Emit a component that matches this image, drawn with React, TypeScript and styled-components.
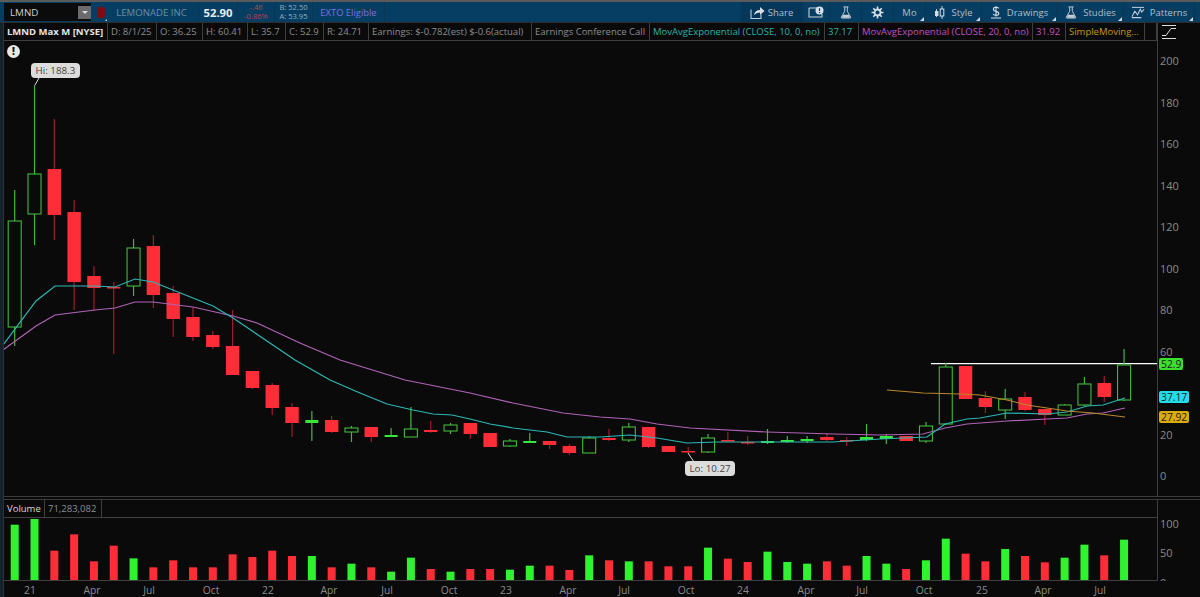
import React from "react";
import styled, { createGlobalStyle } from "styled-components";

const Global = createGlobalStyle`
  html, body { margin: 0; padding: 0; background: #0a0a0a; }
  body { font-family: "Open Sans", "Liberation Sans", sans-serif; }
`;

const Page = styled.div`
  width: 1200px; height: 597px; overflow: hidden; background: #0a0a0a;
  display: flex; flex-direction: column;
`;
const TopRule = styled.div`height: 2px; background: #5b5b5b; flex: none;`;
const Toolbar = styled.div`
  height: 20px; flex: none; display: flex; align-items: stretch; background: #063e63;
  border-bottom: 1px solid #2d2d2d; padding: 0 5px 0 4px; color: #c9d6df; font-size: 11px;
`;
const SymbolBox = styled.div`
  width: 87px; margin: 1px 0; background: #0b0b0b; display: flex; align-items: center; justify-content: space-between;
  padding-left: 6px; color: #d0d0d0; font-size: 9.8px; box-sizing: border-box;
`;
const Drop = styled.div`
  width: 13px; height: 13px; background: #6b6b6b; display: flex; align-items: center; justify-content: center;
  &::after { content: ""; border: 3px solid transparent; border-top: 3px solid #ddd; margin-top: 3px; }
`;
const RedFlag = styled.div`
  width: 8px; height: 11px; margin: 5px 0 0 6px; background: #7d0d14; border-radius: 2px; flex: none; position: relative;
  &::after { content: ""; position: absolute; right: -2px; bottom: -3px; border: 1.5px solid transparent; border-right-color: #cfd8de; border-bottom-color: #cfd8de; }
`;
const Cell = styled.div<{ $w: number; $line?: boolean }>`
  width: ${p => p.$w}px; flex: none; box-sizing: border-box; display: flex; flex-direction: column;
  align-items: center; justify-content: center;
  ${p => p.$line ? "border-right: 1px solid #0d3450;" : ""}
`;
const Company = styled.span`color: #6a8ea6; font-size: 9.6px; white-space: nowrap;`;
const Last = styled.span`color: #e6edf2; font-size: 11.3px; font-weight: 700;`;
const Tiny = styled.span<{ $red?: boolean }>`
  color: ${p => p.$red ? "#b8434f" : "#93acbd"}; font-size: 7.6px; line-height: 9px; white-space: nowrap;
`;
const Exto = styled.span`color: #7f6ee0; font-size: 9.4px; white-space: nowrap;`;
const Spacer = styled.div`flex: 1;`;
const ToolButton = styled.div<{ $w: number; $corner?: boolean; $tint?: boolean }>`
  width: ${p => p.$w}px; flex: none; position: relative; display: flex; align-items: center; justify-content: center;
  gap: 3px; color: #aebfcb; font-size: 9.5px; box-sizing: border-box;
  background: ${p => p.$tint ? "#05375a" : "transparent"};
  border-right: 1px solid #0b3550;
  ${p => p.$corner ? `&::after { content: ""; position: absolute; right: 1px; bottom: 1px; border: 2px solid transparent; border-right-color: #cfd8de; border-bottom-color: #cfd8de; }` : ""}
  svg { flex: none; }
`;
const Label = styled.span<{ $gap?: number }>`
  margin-left: ${p => p.$gap || 0}px; white-space: nowrap;
`;

const Body = styled.div`flex: 1; display: flex; min-height: 0;`;
const LeftEdge = styled.div`width: 3px; flex: none; background: #14222c; border-right: 1px solid #2d3338;`;
const Column = styled.div`flex: 1; display: flex; flex-direction: column; min-width: 0;`;

const PricePane = styled.div`
  height: 474px; flex: none; position: relative; border-bottom: 1px solid #3c3c3c; box-sizing: border-box;
`;
const Legend = styled.div`
  height: 18px; width: 1153px; display: flex; border-bottom: 1px solid #3f3f3f; box-sizing: border-box; position: relative; z-index: 1;
`;
const LegendCell = styled.div<{ $w: number; $c?: string; $bold?: boolean }>`
  width: ${p => p.$w}px; flex: none; box-sizing: border-box; border-right: 1px solid #3f3f3f;
  color: ${p => p.$c || "#8d8d8d"}; font-size: 9.5px; font-weight: ${p => p.$bold ? 700 : 400};
  line-height: 17px; padding-left: 3px; white-space: nowrap; overflow: hidden;
`;
const ChartSvg = styled.svg`position: absolute; left: 0; top: 0; display: block;`;
const Callout = styled.div<{ $x: number; $y: number }>`
  position: absolute; left: ${p => p.$x}px; top: ${p => p.$y}px; padding: 0 4.5px; height: 15px; line-height: 15px;
  background: #dcdcdc; color: #444; font-size: 9.8px; border-radius: 4px; white-space: nowrap;
`;
const Alert = styled.div`
  position: absolute; left: 3px; top: 22px; width: 13px; height: 13px; border-radius: 50%; background: #e8e8e8;
  color: #111; font-size: 10px; font-weight: 800; line-height: 13px; text-align: center;
`;
const PriceTag = styled.div<{ $y: number; $bg: string }>`
  position: absolute; left: 1155px; top: ${p => p.$y}px; height: 12px; line-height: 12px; padding: 0 2px;
  background: ${p => p.$bg}; color: #1c1c1c; font-size: 10.3px; border-radius: 2px;
`;
const AxisIcon = styled.div`position: absolute; left: 1158px; top: 2px; line-height: 0;`;
const VolumePane = styled.div`
  margin-top: 2px; height: 83px; flex: none; position: relative; border-top: 1px solid #3c3c3c; box-sizing: border-box;
`;
const VolLegend = styled(Legend)`height: 18px; position: relative;`;
const TimeAxis = styled.div`height: 17px; flex: none; position: relative;`;
const TimeLabel = styled.span<{ $x: number }>`
  position: absolute; left: ${p => p.$x}px; top: 1px; transform: translateX(-50%);
  color: #8a8a8a; font-size: 10.3px; line-height: 14px;
`;

const UP = "#44b83e", DOWN = "#ff2d38", WICKDOWN = "#a01c30";
type C = [number, number, number, number, number]; // wick top, wick bottom, body top, body bottom, 1 = up
const candles: C[] = [
  [190,346,221,327,1],[85,245,174,214,1],[119,240,169,215,0],[200,310,212,282,0],[266,311,276,288,0],
  [282,354,287,288,0],[239,296,248,286,1],[235,308,246,295,0],[286,337,293,319,0],[307,341,317,337,0],
  [331,349,335,347,0],[310,375,346,375,0],[371,389,371,388,0],[383,415,385,408,0],[403,437,407,423,0],
  [411,441,420,423,1],[416,433,420,432,0],[426,442,428,432,1],[427,442,427,437,0],[428,437,435,437,1],
  [407,437,429,437,1],[421,433,430,432,0],[423,434,425,431,1],[423,439,423,434,0],[433,447,433,447,0],
  [439,447,441,446,1],[433,443,441,443,1],[441,449,441,445,0],[444,455,446,453,0],[436,453,438,453,1],
  [429,441,438,440,0],[423,442,427,440,1],[427,448,427,447,0],[446,452,446,452,0],[447,453,451,452,0],
  [434,453,438,452,1],[432,442,440,441,0],[436,445,442,443,0],[429,444,441,443,1],[436,443,440,442,1],
  [436,443,439,441,1],[433,441,437,440,0],[437,446,440,441,0],[424,441,437,440,1],[434,444,436,439,1],
  [436,441,436,441,0],[422,443,426,441,1],[363,425,367,424,1],[366,399,366,399,0],[391,413,398,407,0],
  [389,419,399,410,1],[392,411,397,410,0],[409,425,409,415,0],[404,415,405,415,1],[377,406,384,405,1],
  [376,402,383,397,0],[349,401,365,400,1],
];
const cx = (i: number) => 14.7 + 19.81 * i;

const teal = "3,345 36,301 55,286 95,286 115,287 135,279 153,282 213,306 233,318 295,360 330,380 360,393 387,404 413,410 433,414 452,415 470,419 490,424 513,428 547,432 567,437 600,437 630,435 657,438 687,443 717,442 767,442 833,442 880,439 927,437 945,424 967,419 980,418 1007,413 1047,414 1067,412 1087,406 1103,405 1125,398";
const pink = "3,350 36,326 55,315 95,310 115,308 135,302 153,302 193,307 233,316 257,323 300,343 340,360 405,380 470,393 513,403 563,413 600,417 630,419 657,424 690,428 767,432 833,434 880,435 923,434 945,428 967,424 1007,421 1047,419 1067,418 1087,414 1103,413 1125,408";
const orange = "887,390 923,393 960,394 980,395 1007,400 1027,405 1047,408 1067,411 1093,413 1125,417";

const vols: [number, number][] = [
  [107,1],[90,1],[185,0],[136,0],[217,0],[170,0],[208,1],[235,0],[214,0],[235,0],[235,0],[196,0],[204,0],[185,0],[201,0],[201,1],[235,0],[224,1],[235,0],[248,1],
  [206,1],[240,0],[248,1],[240,0],[240,0],[242,1],[230,1],[230,0],[243,0],[199,1],[214,0],[217,1],[217,0],[232,0],[232,0],[176,1],[209,0],[219,0],[188,1],[219,1],
  [224,1],[217,0],[230,0],[201,1],[224,1],[240,0],[214,1],[149,1],[194,0],[217,0],[180,1],[201,0],[220,0],[206,1],[167,1],[199,0],[152,1],
];

const priceTicks = [200,180,160,140,120,100,80,60,20,0];
const priceY = (v: number) => 476 - v * 2.075;
const times: [string, number][] = [
  ["21",30],["Apr",92],["Jul",149],["Oct",211],["22",268],["Apr",329],["Jul",387],
  ["Oct",449],["23",506],["Apr",568],["Jul",624],["Oct",686],["24",743],["Apr",806],["Jul",862],["Oct",924],["25",982],["Apr",1043],["Jul",1100],
];
const legend: [string, number, string?, boolean?][] = [
  ["LMND Max M [NYSE]",104,"#e4e4e4",true],["D: 8/1/25",49],["O: 36.25",46],["H: 60.41",45],["L: 35.7",38],["C: 52.9",38],["R: 24.71",45],
  ["Earnings: $-0.782(est) $-0.6(actual)",163],["Earnings Conference Call",118],
  ["MovAvgExponential (CLOSE, 10, 0, no)",175,"#26b5a8"],["37.17",34,"#26b5a8"],
  ["MovAvgExponential (CLOSE, 20, 0, no)",174,"#c050c0"],["31.92",33,"#c050c0"],["SimpleMoving...",79,"#c8961e"],["",12],
];

const st = { fill: "none", stroke: "#c3ced6", strokeWidth: 1.1 };
const Flask = () => (
  <svg width="12" height="15" viewBox="0 0 14 15"><path d="M4 1h6M5.5 1v5L1.5 13q-.4 1 .8 1h9.4q1.2 0 .8-1L8.5 6V1" {...st}/><path d="M3.6 10h6.8l1.6 3.5H2z" fill="#c3ced6"/></svg>
);

export default function App() {
  return (
    <Page>
      <Global />
      <TopRule />
      <Toolbar>
        <SymbolBox>LMND<Drop /></SymbolBox>
        <RedFlag />
        <Cell $w={94} $line><Company>LEMONADE INC</Company></Cell>
        <Cell $w={39} $line><Last>52.90</Last></Cell>
        <Cell $w={37} $line><Tiny $red>-.46</Tiny><Tiny $red>-0.86%</Tiny></Cell>
        <Cell $w={38} $line><Tiny>B: 52.50</Tiny><Tiny>A: 53.95</Tiny></Cell>
        <Cell $w={72} $line><Exto>EXTO Eligible</Exto></Cell>
        <Spacer />
        <ToolButton $w={62} $tint>
          <svg width="15" height="13" viewBox="0 0 15 13"><path d="M1 3.5v9h10v-4" {...st}/><path d="M4 9q1-5 6-5V1l4.5 4L10 9V6.5Q6 6.5 4 9z" fill="#d6dfe5"/></svg>
          <Label>Share</Label>
        </ToolButton>
        <ToolButton $w={27}>
          <svg width="16" height="12" viewBox="0 0 16 12"><path d="M1 2h9M1 2v9h13V8" {...st}/><circle cx="11.5" cy="4.5" r="4" fill="#d6dfe5"/><path d="M11.5 2.2v2.8M11.5 6v.9" stroke="#063e63" strokeWidth="1.2"/></svg>
        </ToolButton>
        <ToolButton $w={32}><Flask /></ToolButton>
        <ToolButton $w={32}>
          <svg width="13" height="13" viewBox="0 0 13 13"><circle cx="6.5" cy="6.5" r="3" fill="none" stroke="#d6dfe5" strokeWidth="1.8"/><path d="M6.5 .5v2.5M6.5 10v2.5M.5 6.5h2.5M10 6.5h2.5M2.3 2.3l1.8 1.8M8.9 8.9l1.8 1.8M2.3 10.7l1.8-1.8M8.9 4.1l1.8-1.8" stroke="#d6dfe5" strokeWidth="1.6"/></svg>
        </ToolButton>
        <ToolButton $w={32} $corner><Label>Mo</Label></ToolButton>
        <ToolButton $w={56} $corner>
          <svg width="11" height="13" viewBox="0 0 11 13"><path d="M2.5 3v8M8 0v13" stroke="#c3ced6"/><rect x="1" y="5" width="3.4" height="5" fill="#d6dfe5"/><rect x="6.2" y="3" width="3.6" height="7" fill="#063e63" stroke="#d6dfe5"/></svg>
          <Label $gap={3}>Style</Label>
        </ToolButton>
        <ToolButton $w={76} $corner>
          <svg width="10" height="14" viewBox="0 0 10 14"><path d="M7.8 3.3Q7 2.3 5 2.3 2.4 2.3 2.4 4.2 2.4 5.8 5 6.2 7.8 6.7 7.8 8.4 7.8 10.3 5 10.3 3 10.3 2.1 9.2M5 1v10.5" fill="none" stroke="#d6dfe5" strokeWidth="1.1"/><path d="M0 13h10" stroke="#d6dfe5"/></svg>
          <Label $gap={3}>Drawings</Label>
        </ToolButton>
        <ToolButton $w={66} $corner><Flask /><Label $gap={3}>Studies</Label></ToolButton>
        <ToolButton $w={71} $corner>
          <svg width="14" height="13" viewBox="0 0 15 13"><path d="M1 1h13" stroke="#d6dfe5"/><path d="M1 11l3-6 3 4 3-6 1.5 3L14 3M1 12h10" {...st}/></svg>
          <Label $gap={2}>Patterns</Label>
        </ToolButton>
      </Toolbar>
      <Body>
        <LeftEdge />
        <Column>
          <PricePane>
            <ChartSvg width="1196" height="473" viewBox="4 23 1196 473">
              <line x1="1157.5" y1="23" x2="1157.5" y2="497" stroke="#3f3f3f" />
              {priceTicks.map(v => (
                <text key={v} x="1160" y={priceY(v) + 4} fill="#8a8a8a" fontSize="11" fontFamily="Open Sans">{v}</text>
              ))}
              <line x1="931" y1="363.7" x2="1157" y2="363.7" stroke="#ffffff" strokeWidth="1.2" />
              <line x1="35" y1="85" x2="39" y2="78" stroke="#ddd" />
              <line x1="688" y1="453" x2="694" y2="462" stroke="#ddd" />
              {candles.map(([wt, wb, bt, bb, up], i) => {
                const x = cx(i);
                return (
                  <g key={i}>
                    <line x1={x} x2={x} y1={wt} y2={wb} stroke={up ? UP : WICKDOWN} strokeWidth="1.2" />
                    {up ? (
                      bb - bt < 4
                        ? <rect x={x - 6.5} y={bt} width={13} height={Math.max(bb - bt, 1.5)} fill="#35e83a" />
                        : <rect x={x - 6.5} y={bt} width={13} height={bb - bt} fill="#0a0a0a" stroke={UP} strokeWidth="1.1" />
                    ) : (
                      <rect x={x - 6.7} y={bt} width={13.4} height={Math.max(bb - bt, 1.5)} fill={DOWN} />
                    )}
                  </g>
                );
              })}
              <polyline points={pink} fill="none" stroke="#b163b8" strokeWidth="1.2" />
              <polyline points={teal} fill="none" stroke="#2bb8b4" strokeWidth="1.2" />
              <polyline points={orange} fill="none" stroke="#b8892a" strokeWidth="1.2" />
            </ChartSvg>
            <Legend>
              {legend.map(([t, w, c, b]) => <LegendCell key={t + w} $w={w} $c={c} $bold={b}>{t}</LegendCell>)}
            </Legend>
            <AxisIcon>
              <svg width="14" height="14" viewBox="0 0 14 14"><path d="M0 0.5h14M0 13.5h14" stroke="#ddd"/><path d="M0 10.5h4l5-7h5" fill="none" stroke="#ddd"/></svg>
            </AxisIcon>
            <Alert>!</Alert>
            <Callout $x={27} $y={40}>Hi: 188.3</Callout>
            <Callout $x={681} $y={438}>Lo: 10.27</Callout>
            <PriceTag $y={335} $bg="#3ae02c">52.9</PriceTag>
            <PriceTag $y={368} $bg="#22dcea">37.17</PriceTag>
            <PriceTag $y={388} $bg="#d9ab0c">27.92</PriceTag>
          </PricePane>
          <VolumePane>
            <ChartSvg width="1196" height="81" viewBox="4 501 1196 81">
              <line x1="1157.5" y1="500" x2="1157.5" y2="582" stroke="#3f3f3f" />
              <line x1="4" y1="581.5" x2="1157" y2="581.5" stroke="#3f3f3f" />
              {vols.map(([top, up], i) => (
                <rect key={i} x={cx(i) - 4} y={490 + top / 3} width={8} height={(273 - top) / 3} fill={up ? "#2ff32f" : "#ff2d38"} />
              ))}
              <text x="1160" y="529" fill="#8a8a8a" fontSize="11" fontFamily="Open Sans">100</text>
              <text x="1160" y="558" fill="#8a8a8a" fontSize="11" fontFamily="Open Sans">50</text>
              <text x="1160" y="588" fill="#8a8a8a" fontSize="11" fontFamily="Open Sans">0</text>
            </ChartSvg>
            <VolLegend>
              <LegendCell $w={41} $c="#d8d8d8">Volume</LegendCell>
              <LegendCell $w={57}>71,283,082</LegendCell>
            </VolLegend>
          </VolumePane>
          <TimeAxis>
            {times.map(([t, x], i) => <TimeLabel key={i} $x={x - 4}>{t}</TimeLabel>)}
          </TimeAxis>
        </Column>
      </Body>
    </Page>
  );
}
